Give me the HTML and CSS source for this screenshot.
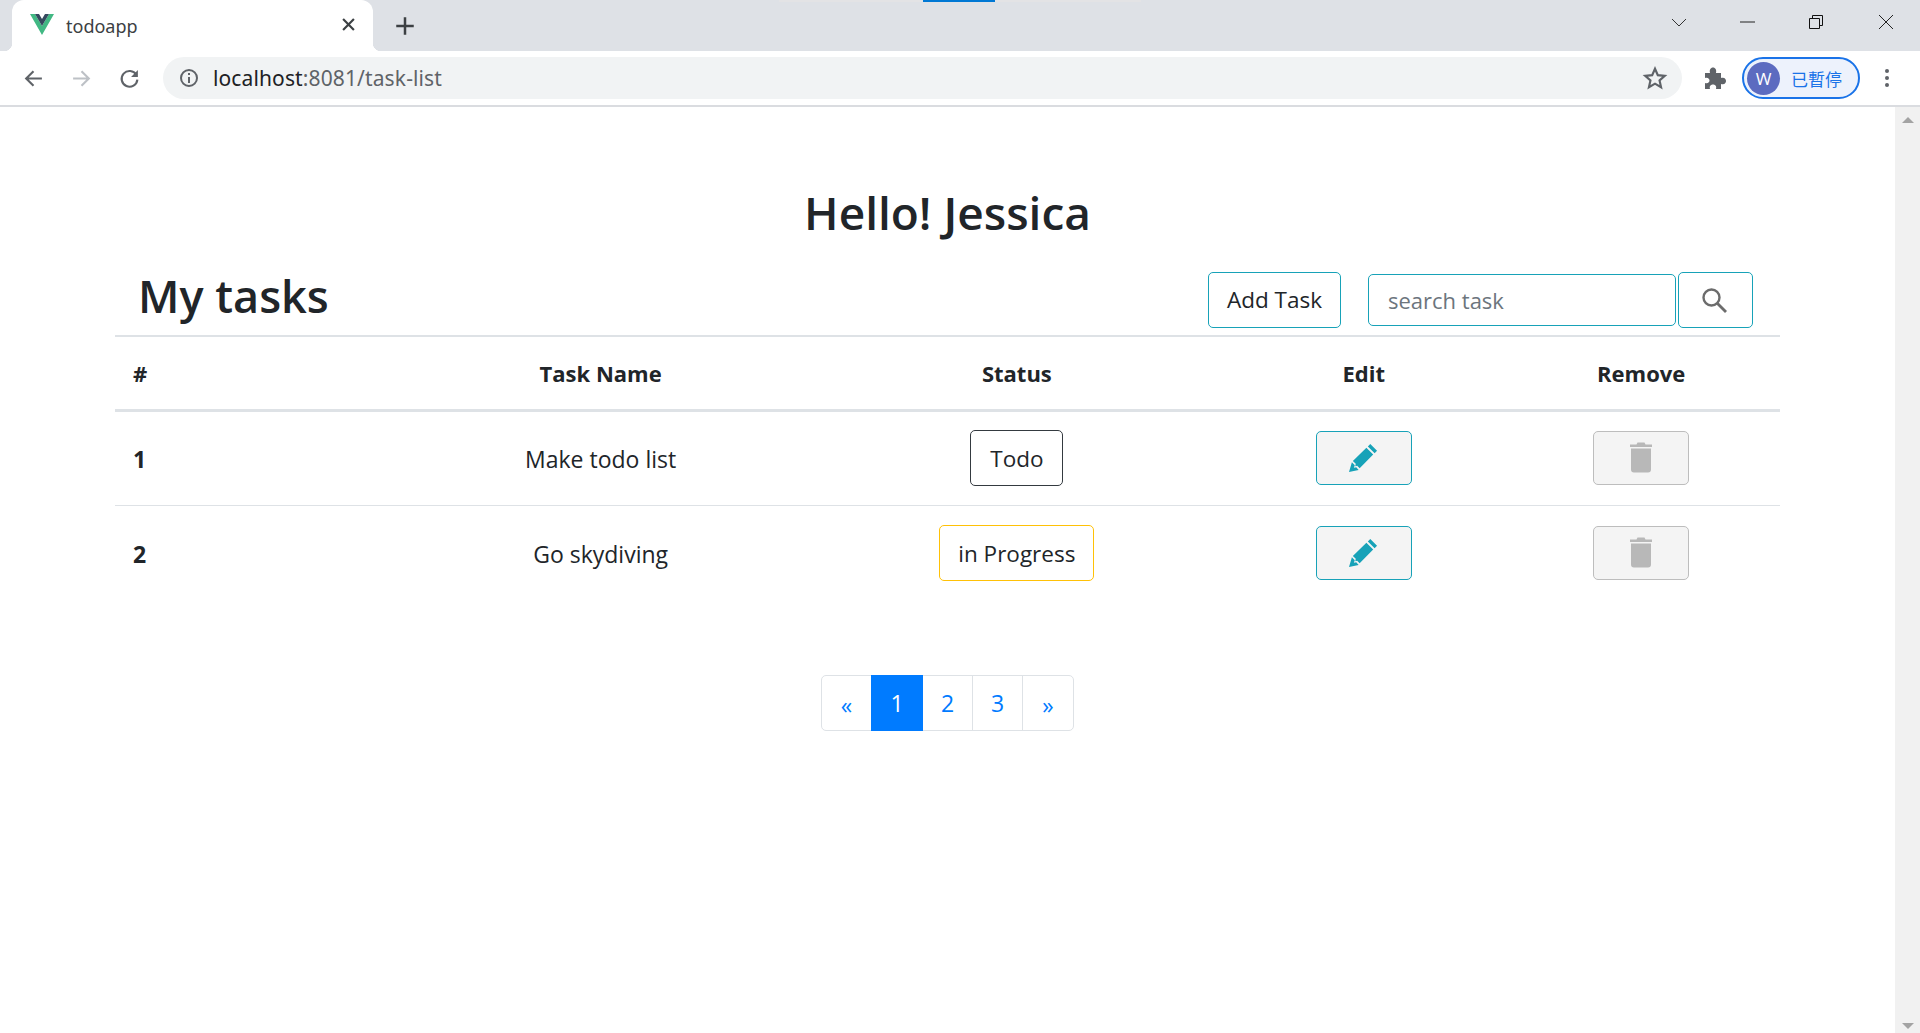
FILE: index.html
```html
<!DOCTYPE html>
<html>

<head>
    <title>todoapp</title>
    <meta charset="UTF-8">
    <link rel="stylesheet" href="styles.css">
</head>

<body>
    <div class="strip"><span class="strip-active"></span></div>
    <div class="tabbar">
        <div class="tab">
            <svg class="favicon" viewBox="0 0 24 21"><polygon fill="#41b883" points="0,0 5,0 12,12 19,0 24,0 12,21"/><polygon fill="#35495e" points="5,0 9,0 12,5 15,0 19,0 12,12"/></svg>
            <span class="tab-title">todoapp</span>
            <svg class="tab-close" viewBox="0 0 12 12"><path d="M1 1L11 11M11 1L1 11" stroke="#3c4043" stroke-width="2"/></svg>
        </div>
        <svg class="newtab" viewBox="0 0 16 16"><path d="M8 1V15M1 8H15" stroke="#3c4043" stroke-width="2"/></svg>
        <div class="winctrls">
            <svg class="winbtn winbtn-list" viewBox="0 0 16 16"><path d="M1 5L8 12L15 5" fill="none" stroke="#333" stroke-width="1"/></svg>
            <svg class="winbtn" viewBox="0 0 16 16"><path d="M1 8H16" stroke="#222" stroke-width="1"/></svg>
            <svg class="winbtn" viewBox="0 0 16 16"><path d="M1.5 4.5H11.5V14.5H1.5ZM4.5 4.5V1.5H14.5V11.5H11.5" fill="none" stroke="#111" stroke-width="1"/></svg>
            <svg class="winbtn winbtn-close" viewBox="0 0 16 16"><path d="M1 1L15 15M15 1L1 15" stroke="#222" stroke-width="1"/></svg>
        </div>
    </div>
    <div class="toolbar">
        <svg class="navicon nav-back" viewBox="0 0 20 20"><path d="M18 10H3M10 3L3 10L10 17" fill="none" stroke="#5f6368" stroke-width="2"/></svg>
        <svg class="navicon nav-forward" viewBox="0 0 20 20"><path d="M2 10H17M10 3L17 10L10 17" fill="none" stroke="#bdc1c6" stroke-width="2"/></svg>
        <svg class="navicon nav-reload" viewBox="0 0 20 20"><path d="M16.500 6.500A7.500 7.500 0 1 0 17.500 11" fill="none" stroke="#5f6368" stroke-width="2"/><polygon fill="#5f6368" points="18,2 18,8.500 11.500,8.500"/></svg>
        <div class="omnibox">
            <svg class="info" viewBox="0 0 20 20"><circle cx="10" cy="10" r="8" fill="none" stroke="#5f6368" stroke-width="2"/><path d="M10 9V15M10 5V7" stroke="#5f6368" stroke-width="2"/></svg>
            <span class="url"><span class="url-host">localhost</span>:8081/task-list</span>
            <svg class="star" viewBox="0 0 24 24"><path d="M12 3.500L14.600 9.400L21 10L16.200 14.200L17.600 20.500L12 17.200L6.400 20.500L7.800 14.200L3 10L9.400 9.400Z" fill="none" stroke="#5f6368" stroke-width="2"/></svg>
        </div>
        <svg class="puzzle" viewBox="0 0 22 22"><path d="M1 6H6C5 2 7.500 0.500 9 0.500C10.500 0.500 13 2 12 6H17V11C21 10 22 12.500 22 14C22 15.500 21 18 17 17V22H12C13 18.500 10.500 17.500 9 17.500C7.500 17.500 5 18.500 6 22H1V16C4 17 5.500 15 5.500 13.500C5.500 12 4 10 1 11Z" fill="#5f6368"/></svg>
        <div class="profile">
            <span class="avatar">W</span>
            <span class="paused">已暫停</span>
        </div>
        <svg class="kebab" viewBox="0 0 6 20"><circle cx="3" cy="3" r="2" fill="#5f6368"/><circle cx="3" cy="10" r="2" fill="#5f6368"/><circle cx="3" cy="17" r="2" fill="#5f6368"/></svg>
    </div>

    <div class="viewport">
        <main class="page">
            <h2 class="hello">Hello! Jessica</h2>
            <div class="head-row">
                <h1 class="my-tasks">My tasks</h1>
                <div class="actions">
                    <button class="btn btn-info add-btn">Add Task</button>
                    <input class="search-input" type="text" placeholder="search task">
                    <button class="btn btn-info search-btn">
                        <svg class="search-icon" viewBox="0 0 26 26"><circle cx="10.500" cy="10.500" r="8" fill="none" stroke="#6c6c6c" stroke-width="2.400"/><path d="M16.500 16.500L25 25" stroke="#6c6c6c" stroke-width="2.800"/></svg>
                    </button>
                </div>
            </div>
            <table class="tasks">
                <thead>
                    <tr>
                        <th class="col-id">#</th>
                        <th class="col-name">Task Name</th>
                        <th class="col-name">Status</th>
                        <th class="col-act">Edit</th>
                        <th class="col-act">Remove</th>
                    </tr>
                </thead>
                <tbody>
                    <tr>
                        <td class="num text-cell">1</td>
                        <td class="text-cell">Make todo list</td>
                        <td><button class="btn btn-dark status-btn">Todo</button></td>
                        <td><button class="btn icon-btn edit-btn"><svg class="pencil" viewBox="0 0 30 30"><path d="M22 1L29 8L26.500 10.500L19.500 3.500ZM18 5L25 12L11 26L8.500 23.500L6.500 24L7 21.500L4 18.500ZM3 20L6 23L5 25.500L7.500 25L10 28L0 30Z" fill="#17a2b8"/></svg></button></td>
                        <td><button class="btn icon-btn remove-btn"><svg class="trash" viewBox="0 0 22 30"><path d="M7.500 0H14.500L15.500 2H22V4.500H0V2H6.500ZM1 6H21V27A3 3 0 0 1 18 30H4A3 3 0 0 1 1 27Z" fill="#b8b8b8"/></svg></button></td>
                    </tr>
                    <tr>
                        <td class="num text-cell">2</td>
                        <td class="text-cell">Go skydiving</td>
                        <td><button class="btn btn-warn status-btn">in Progress</button></td>
                        <td><button class="btn icon-btn edit-btn"><svg class="pencil" viewBox="0 0 30 30"><path d="M22 1L29 8L26.500 10.500L19.500 3.500ZM18 5L25 12L11 26L8.500 23.500L6.500 24L7 21.500L4 18.500ZM3 20L6 23L5 25.500L7.500 25L10 28L0 30Z" fill="#17a2b8"/></svg></button></td>
                        <td><button class="btn icon-btn remove-btn"><svg class="trash" viewBox="0 0 22 30"><path d="M7.500 0H14.500L15.500 2H22V4.500H0V2H6.500ZM1 6H21V27A3 3 0 0 1 18 30H4A3 3 0 0 1 1 27Z" fill="#b8b8b8"/></svg></button></td>
                    </tr>
                </tbody>
            </table>
            <ul class="pagination">
                <li class="page-item arrow">«</li>
                <li class="page-item active">1</li>
                <li class="page-item">2</li>
                <li class="page-item">3</li>
                <li class="page-item arrow">»</li>
            </ul>
        </main>
        <div class="scrollbar">
            <span class="arrow-up"></span>
            <span class="arrow-down"></span>
        </div>
    </div>
</body>

</html>
```

FILE: styles.css
```css
* {
    box-sizing: border-box;
}
html, body {
    height: 100%;
}
body {
    margin: 0;
    display: flex;
    flex-direction: column;
    overflow: hidden;
    font-family: "Open Sans", "Noto Sans", sans-serif;
    color: #212529;
    background: #fff;
}

/* capture indicator at the very top */
.strip {
    position: absolute;
    top: 0;
    left: 779px;
    width: 362px;
    height: 2px;
    background: #e3e3e5;
}
.strip-active {
    display: block;
    width: 72px;
    height: 2px;
    margin-left: 144px;
    background: #0078d4;
}

/* browser chrome */
.tabbar {
    height: 51px;
    flex: none;
    display: flex;
    align-items: flex-end;
    background: #dee1e6;
}
.tab {
    position: relative;
    width: 361px;
    height: 51px;
    margin-left: 12px;
    padding: 0 18px 0 18px;
    display: flex;
    align-items: center;
    background: #fff;
    border-radius: 12px 12px 0 0;
}
.tab::before,
.tab::after {
    content: "";
    position: absolute;
    bottom: 0;
    width: 8px;
    height: 8px;
}
.tab::before {
    left: -8px;
    background: radial-gradient(circle at 0 0, #dee1e6 8px, #fff 8.500px);
}
.tab::after {
    right: -8px;
    background: radial-gradient(circle at 100% 0, #dee1e6 8px, #fff 8.500px);
}
.favicon {
    width: 24px;
    height: 21px;
    margin-bottom: 2px;
}
.tab-title {
    margin-left: 12px;
    flex: 1;
    font-size: 18px;
    color: #3c4043;
    font-family: "Noto Sans", sans-serif;
}
.tab-close {
    width: 13px;
    height: 13px;
    margin-bottom: 2px;
}
.newtab {
    width: 20px;
    height: 20px;
    margin: 0 0 15px 22px;
}
.winctrls {
    margin-left: auto;
    height: 51px;
    display: flex;
    align-items: center;
    padding-right: 26px;
    gap: 53px;
}
.winbtn {
    width: 16px;
    height: 16px;
    margin-bottom: 8px;
}
.winbtn-list {
    margin-right: -1px;
}
.winbtn-close {
    margin-left: 1px;
}
.toolbar {
    height: 56px;
    flex: none;
    display: flex;
    align-items: center;
    padding: 0 22px 0 23px;
    background: #fff;
    border-bottom: 2px solid #dadce0;
}
.navicon {
    width: 21px;
    height: 21px;
    margin-right: 27px;
}
.nav-reload {
    margin-right: 23px;
}
.omnibox {
    width: 1519px;
    height: 42px;
    display: flex;
    align-items: center;
    padding: 0 14px 0 16px;
    background: #f1f3f4;
    border-radius: 21px;
}
.info {
    width: 20px;
    height: 20px;
}
.url {
    margin-left: 14px;
    flex: 1;
    font-size: 21px;
    letter-spacing: 0.12px;
    color: #5f6368;
    font-family: "Noto Sans", sans-serif;
}
.url-host {
    color: #202124;
}
.star {
    width: 26px;
    height: 26px;
}
.puzzle {
    width: 22px;
    height: 22px;
    margin-left: 22px;
}
.profile {
    width: 118px;
    height: 42px;
    margin-left: 16px;
    padding-left: 3px;
    display: flex;
    align-items: center;
    background: #edf2fc;
    border: 2px solid #1a73e8;
    border-radius: 21px;
}
.avatar {
    width: 33px;
    height: 33px;
    border-radius: 50%;
    background: #5c6bc0;
    color: #fff;
    font-size: 17px;
    line-height: 33px;
    text-align: center;
}
.paused {
    margin-left: 11px;
    font-size: 17px;
    color: #1a73e8;
    font-family: "Noto Sans CJK TC", sans-serif;
}
.kebab {
    width: 6px;
    height: 20px;
    margin-left: 24px;
}

/* page */
.viewport {
    flex: 1;
    display: flex;
    min-height: 0;
}
.page {
    flex: 1;
    padding: 75px 115px 0 115px;
}
.scrollbar {
    width: 25px;
    flex: none;
    display: flex;
    flex-direction: column;
    justify-content: space-between;
    align-items: center;
    padding: 10px 0 4px;
    background: #f1f1f1;
}
.arrow-up {
    border: 5px solid transparent;
    border-top: 0;
    border-bottom: 6px solid #a3a3a3;
    border-left-width: 6px;
    border-right-width: 6px;
}
.arrow-down {
    border: 5px solid transparent;
    border-bottom: 0;
    border-top: 6px solid #a3a3a3;
    border-left-width: 6px;
    border-right-width: 6px;
}
.hello {
    margin: 0 0 30px;
    font-size: 46px;
    font-weight: 600;
    line-height: 60px;
    text-align: center;
}
.head-row {
    height: 63px;
    display: flex;
    justify-content: space-between;
    padding: 0 27px 8px 23px;
}
.my-tasks {
    margin: 0;
    font-size: 45px;
    font-weight: 600;
    line-height: 47px;
}
.actions {
    display: flex;
    align-items: center;
}
.btn {
    height: 56px;
    padding: 2px 19px 0;
    border: 1px solid transparent;
    border-radius: 5px;
    background: #fff;
    color: #212529;
    font-family: inherit;
    font-size: 22.500px;
    white-space: nowrap;
}
.btn-info {
    border-color: #17a2b8;
}
.btn-dark {
    border-color: #343a40;
}
.btn-warn {
    padding: 2px 18px 0;
    border-color: #ffc107;
}
.add-btn {
    width: 133px;
    padding: 0;
    margin-right: 27px;
}
.search-input {
    width: 308px;
    height: 52px;
    padding: 0 19px;
    border: 1px solid #17a2b8;
    border-radius: 5px;
    font-family: inherit;
    font-size: 22px;
    color: #212529;
    outline: none;
}
.search-input::placeholder {
    color: #6c757d;
}
.search-btn {
    width: 75px;
    margin-left: 2px;
    padding: 0 3px 0 0;
    display: flex;
    align-items: center;
    justify-content: center;
}
.search-icon {
    width: 26px;
    height: 26px;
}
.tasks {
    width: 100%;
    table-layout: fixed;
    border-collapse: collapse;
    font-size: 23px;
}
.tasks th {
    height: 74px;
    padding: 0 18px;
    font-size: 22px;
    font-weight: 700;
    border-top: 2px solid #dee2e6;
    border-bottom: 3px solid #dee2e6;
}
.tasks td {
    height: 94px;
    padding: 1px 18px 0;
    text-align: center;
    vertical-align: middle;
}
.tasks tbody tr:first-child td {
    height: 95px;
    padding: 0 18px 1px;
    border-bottom: 1px solid #dee2e6;
}
.tasks td.text-cell {
    padding-top: 3px;
}
.tasks tbody tr:first-child td.text-cell {
    padding-top: 2px;
}
.tasks th.col-id,
.tasks td.num {
    text-align: left;
    font-weight: 700;
}
.col-id {
    width: 16.667%;
}
.col-name {
    width: 25%;
}
.col-act {
    width: 16.667%;
}
.icon-btn {
    width: 96px;
    height: 54px;
    padding: 0;
    display: inline-flex;
    align-items: center;
    justify-content: center;
    background: #f4f4f4;
}
.edit-btn {
    border-color: #17a2b8;
}
.remove-btn {
    border-color: #bdbdbd;
}
.pencil {
    width: 29px;
    height: 29px;
}
.trash {
    width: 22px;
    height: 31px;
}
.pagination {
    width: 253px;
    height: 56px;
    margin: 76px auto 0;
    padding: 0;
    display: flex;
    list-style: none;
    border: 1px solid #dee2e6;
    border-radius: 5px;
}
.page-item {
    flex: none;
    width: 50px;
    display: flex;
    align-items: center;
    justify-content: center;
    font-size: 23px;
    color: #007bff;
    border-left: 1px solid #dee2e6;
}
.page-item:first-child {
    width: 49px;
    border-left: 0;
}
.page-item:last-child {
    flex: 1;
}
.page-item.active {
    width: 52px;
    margin: -1px 0;
    background: #007bff;
    border-left: 0;
    color: #fff;
}
.page-item.active + .page-item {
    width: 49px;
    border-left: 0;
}
.arrow {
    padding-top: 4px;
}
```
